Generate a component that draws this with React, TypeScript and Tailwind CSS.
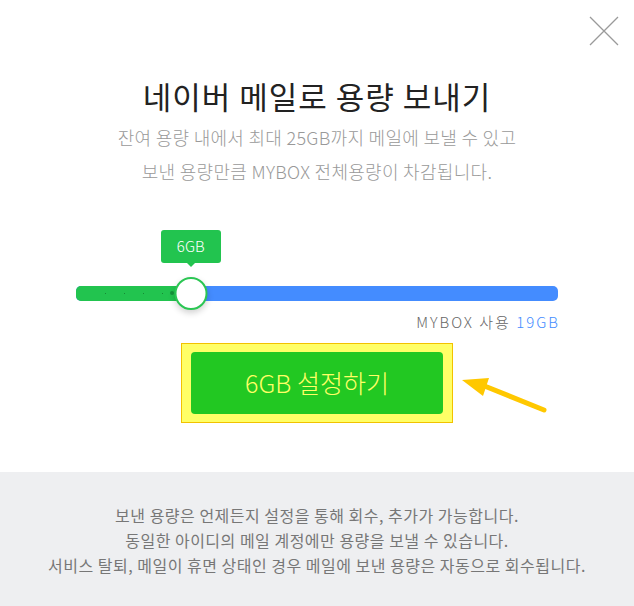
import React from 'react';

const font = { fontFamily: '"Noto Sans CJK KR", "Noto Sans", sans-serif' };

const CloseIcon: React.FC = () => (
  <svg width="30" height="30" viewBox="0 0 30 30" className="block">
    <path d="M1 1 L29 29 M29 1 L1 29" stroke="#9a9a9a" strokeWidth="1.3" fill="none" />
  </svg>
);

const PointerArrow: React.FC = () => (
  <svg width="92" height="42" viewBox="0 0 92 42" className="block">
    <path d="M84 36 L22 11" stroke="#ffc800" strokeWidth="5" strokeLinecap="round" fill="none" />
    <path d="M2 6 L29 4 L23 22 Z" fill="#ffc800" />
  </svg>
);

const SizeSlider: React.FC<{ value: number; max: number; used: number }> = ({ value, max, used }) => {
  const pct = (value / max) * 100;
  const ticks = [1, 2, 3, 4];
  return (
    <div className="w-[482px] mx-auto flex flex-col">
      {/* tooltip row */}
      <div className="relative h-[56px]">
        <div
          className="absolute top-0 -translate-x-1/2 w-[60px] h-[33px] rounded-[3px] bg-[#22c44f] flex items-center justify-center text-white text-[15px] font-light"
          style={{ left: `${pct}%` }}
        >
          {value}GB
          <span className="absolute -bottom-[4px] left-1/2 -translate-x-1/2 w-0 h-0 border-x-[4px] border-x-transparent border-t-[4px] border-t-[#22c44f]" />
        </div>
      </div>
      {/* track */}
      <div className="relative h-[15px]">
        <div className="h-full rounded-[5px] bg-[#448cff] overflow-hidden flex">
          <div className="relative h-full bg-[#22c44f]" style={{ width: `${pct}%` }}>
            {ticks.map((t) => (
              <span
                key={t}
                className="absolute top-[7px] w-[1px] h-[1px] bg-[#168a35]"
                style={{ left: `${t * 19 + 10}px` }}
              />
            ))}
            <span className="absolute top-[5px] left-[94px] w-[4px] h-[4px] rounded-full bg-[#15943a]" />
          </div>
        </div>
        <div
          className="absolute -top-[9px] -translate-x-1/2 w-[33px] h-[33px] rounded-full bg-white border-2 border-[#2bc653] shadow-[0_3px_6px_rgba(0,0,0,0.18)]"
          style={{ left: `${pct}%` }}
        />
      </div>
      {/* usage */}
      <div className="mt-[11px] text-right text-[15px] leading-[20px] font-light text-[#666] tracking-[2px] -mr-[2px]">
        MYBOX 사용 <span className="text-[#448cff]">{used}GB</span>
      </div>
    </div>
  );
};

export default function App() {
  return (
    <div className="w-full h-[606px] bg-white flex flex-col" style={font}>
      <div className="relative h-[472px] shrink-0 flex flex-col items-center">
        <button className="absolute top-[16px] right-[15px]" title="닫기">
          <CloseIcon />
        </button>

        <h1 className="mt-[76px] text-[31px] leading-[40px] font-normal text-[#222] tracking-[1px]">
          네이버 메일로 용량 보내기
        </h1>
        <p className="mt-[4px] text-[18px] leading-[34px] font-light text-[#999] text-center tracking-[0.3px]">
          잔여 용량 내에서 최대 25GB까지 메일에 보낼 수 있고
          <br />
          보낸 용량만큼 MYBOX 전체용량이 차감됩니다.
        </p>

        <div className="mt-[42px] w-full">
          <SizeSlider value={6} max={25.2} used={19} />
        </div>

        <div className="relative mt-[11px]">
          <div className="w-[272px] h-[80px] border border-[#f2c200] bg-[#ffff66] py-[8px] px-[9px]">
            <button className="w-full h-full rounded-[4px] bg-[#22c822] text-[#ffff66] text-[25px] font-light">
              6GB 설정하기
            </button>
          </div>
          <div className="absolute left-[279px] top-[31px]">
            <PointerArrow />
          </div>
        </div>
      </div>

      <div className="flex-1 bg-[#eeeff1] pt-[31px] text-center text-[16px] leading-[25px] text-[#777] tracking-[0.5px]">
        <p>보낸 용량은 언제든지 설정을 통해 회수, 추가가 가능합니다.</p>
        <p>동일한 아이디의 메일 계정에만 용량을 보낼 수 있습니다.</p>
        <p>서비스 탈퇴, 메일이 휴면 상태인 경우 메일에 보낸 용량은 자동으로 회수됩니다.</p>
      </div>
    </div>
  );
}
